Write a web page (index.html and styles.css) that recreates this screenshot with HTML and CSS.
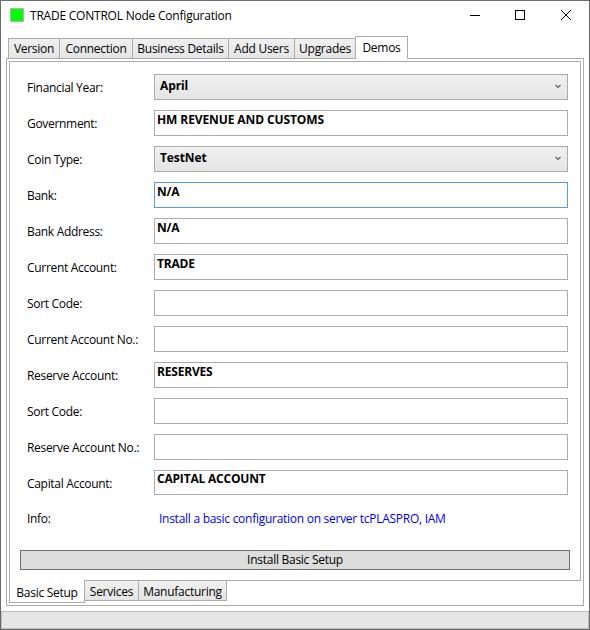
FILE: index.html
```
<!DOCTYPE html>
<html lang="en">
<head>
<meta charset="utf-8">
<title>TRADE CONTROL Node Configuration</title>
<link rel="stylesheet" href="styles.css">
</head>
<body>
<div class="window">
  <header class="titlebar">
    <span class="app-icon"></span>
    <h1 class="title"><span>TRADE CONTROL Node Configuration</span></h1>
    <svg class="controls" width="104" height="12" viewBox="0 0 104 12" fill="none" stroke="#000" shape-rendering="crispEdges">
      <path d="M0 5.500h10M45.500 .5h9v9h-9z"/>
      <path d="M91 0l10 10M101 0l-10 10" shape-rendering="auto"/>
    </svg>
  </header>
  <nav class="tabs">
    <span class="tab w-version">Version</span>
    <span class="tab w-connection">Connection</span>
    <span class="tab w-business">Business Details</span>
    <span class="tab w-users">Add Users</span>
    <span class="tab w-upgrades">Upgrades</span>
    <span class="tab w-demos active">Demos</span>
  </nav>
  <main class="outer">
    <section class="inner">
      <div class="form">
        <div class="row"><label>Financial Year:</label><div class="combo"><b>April</b><svg width="6" height="5" viewBox="0 0 6 5"><path d="M.5 1L3 3.500L5.500 1" fill="none" stroke="#606060" stroke-width="1.200"/></svg></div></div>
        <div class="row"><label>Government:</label><div class="field"><b class="gov">HM REVENUE AND CUSTOMS</b></div></div>
        <div class="row"><label>Coin Type:</label><div class="combo"><b>TestNet</b><svg width="6" height="5" viewBox="0 0 6 5"><path d="M.5 1L3 3.500L5.500 1" fill="none" stroke="#606060" stroke-width="1.200"/></svg></div></div>
        <div class="row"><label>Bank:</label><div class="field focus"><b>N/A</b></div></div>
        <div class="row"><label>Bank Address:</label><div class="field"><b>N/A</b></div></div>
        <div class="row"><label>Current Account:</label><div class="field"><b>TRADE</b></div></div>
        <div class="row"><label>Sort Code:</label><div class="field"></div></div>
        <div class="row"><label>Current Account No.:</label><div class="field"></div></div>
        <div class="row"><label>Reserve Account:</label><div class="field"><b>RESERVES</b></div></div>
        <div class="row"><label>Sort Code:</label><div class="field"></div></div>
        <div class="row"><label>Reserve Account No.:</label><div class="field"></div></div>
        <div class="row last"><label>Capital Account:</label><div class="field"><b>CAPITAL ACCOUNT</b></div></div>
        <div class="row"><label>Info:</label><span class="info">Install a basic configuration on server tcPLASPRO, IAM</span></div>
      </div>
      <button class="install" type="button">Install Basic Setup</button>
    </section>
    <nav class="subtabs">
      <span class="subtab w-basic active">Basic Setup</span>
      <span class="subtab w-services">Services</span>
      <span class="subtab w-manufacturing">Manufacturing</span>
    </nav>
  </main>
  <footer class="status"></footer>
</div>
</body>
</html>
```
FILE: styles.css
```
* { box-sizing: border-box; }
body {
  margin: 0;
  font: 12px/16px "Open Sans", "Noto Sans", sans-serif;
  letter-spacing: -0.27px;
  color: #000;
}
.window {
  width: 590px;
  height: 630px;
  border: 1px solid #6b6b6b;
  background: #fff;
  display: flex;
  flex-direction: column;
  overflow: hidden;
}
.titlebar {
  height: 35px;
  flex: none;
  display: flex;
  align-items: flex-start;
  padding: 7px 15px 0 9px;
}
.app-icon {
  width: 14px;
  height: 14px;
  background: #0f0;
  border: 1px solid #b4b4b4;
}
.title {
  margin: 0 0 0 6px;
  font-size: 12px;
  font-weight: 400;
  letter-spacing: -0.22px;
  white-space: nowrap;
}
.controls { margin: 2px 0 0 auto; }
.tabs {
  height: 22px;
  flex: none;
  display: flex;
  align-items: flex-end;
  padding-left: 7px;
}
.tab, .subtab {
  border: 1px solid #acacac;
  background: linear-gradient(#f0f0f0, #e5e5e5);
  text-align: center;
  white-space: nowrap;
  flex: none;
}
.tab {
  height: 20px;
  margin-right: -1px;
  line-height: 20px;
  border-bottom: 0;
}
.tab.active {
  height: 23px;
  line-height: 21px;
  background: #fff;
  margin-bottom: -1px;
  position: relative;
}
.w-version { width: 52px; }
.w-connection { width: 74px; }
.w-business { width: 97px; }
.w-users { width: 67px; }
.w-upgrades { width: 62px; }
.w-demos { width: 53px; }
.outer {
  width: 578px;
  height: 548px;
  flex: none;
  margin-left: 5px;
  border: 1px solid #acacac;
  padding: 2px;
}
.inner {
  width: 572px;
  height: 520px;
  border: 1px solid #acacac;
  padding: 12px 10px 0;
}
.form { height: 476px; }
.row {
  height: 36px;
  display: flex;
}
.row.last { height: 35px; }
.row label {
  width: 134px;
  flex: none;
  padding: 6px 0 0 7px;
  letter-spacing: -0.31px;
  white-space: nowrap;
}
.field, .combo {
  width: 414px;
  height: 26px;
  border: 1px solid #abadb3;
  display: flex;
  line-height: 17px;
  letter-spacing: -0.2px;
}
.gov { letter-spacing: -0.1px; }
.field { padding-left: 2px; }
.row.last label { padding-top: 6px; }
.row.last .field { height: 25px; line-height: 16px; }
.field.focus { border-color: #569de5; }
.combo {
  border-color: #acacac;
  background: linear-gradient(#f0f0f0, #e5e5e5);
  padding: 2px 5px;
  letter-spacing: -0.1px;
  justify-content: space-between;
}
.combo svg { margin: 7px 1px 0 0; }
.info {
  color: #00f;
  padding: 6px 0 0 5px;
  white-space: nowrap;
}
.install {
  display: block;
  width: 550px;
  height: 20px;
  border: 1px solid #707070;
  background: #ddd;
  font: inherit;
  letter-spacing: inherit;
  line-height: 18px;
  padding: 0;
  color: #000;
}
.subtabs { display: flex; align-items: flex-start; margin-top: -1px; }
.subtab {
  height: 21px;
  margin-right: -1px;
  line-height: 22px;
}
.subtab.active {
  height: 23px;
  line-height: 25px;
  border-top: 0;
  background: #fff;
}
.w-basic { width: 76px; }
.w-services { width: 55px; }
.w-manufacturing { width: 89px; }
.status {
  height: 18px;
  margin-top: 5px;
  flex: none;
  background: #e6e6e6;
  border: 1px solid #bcbcbc;
}
```
